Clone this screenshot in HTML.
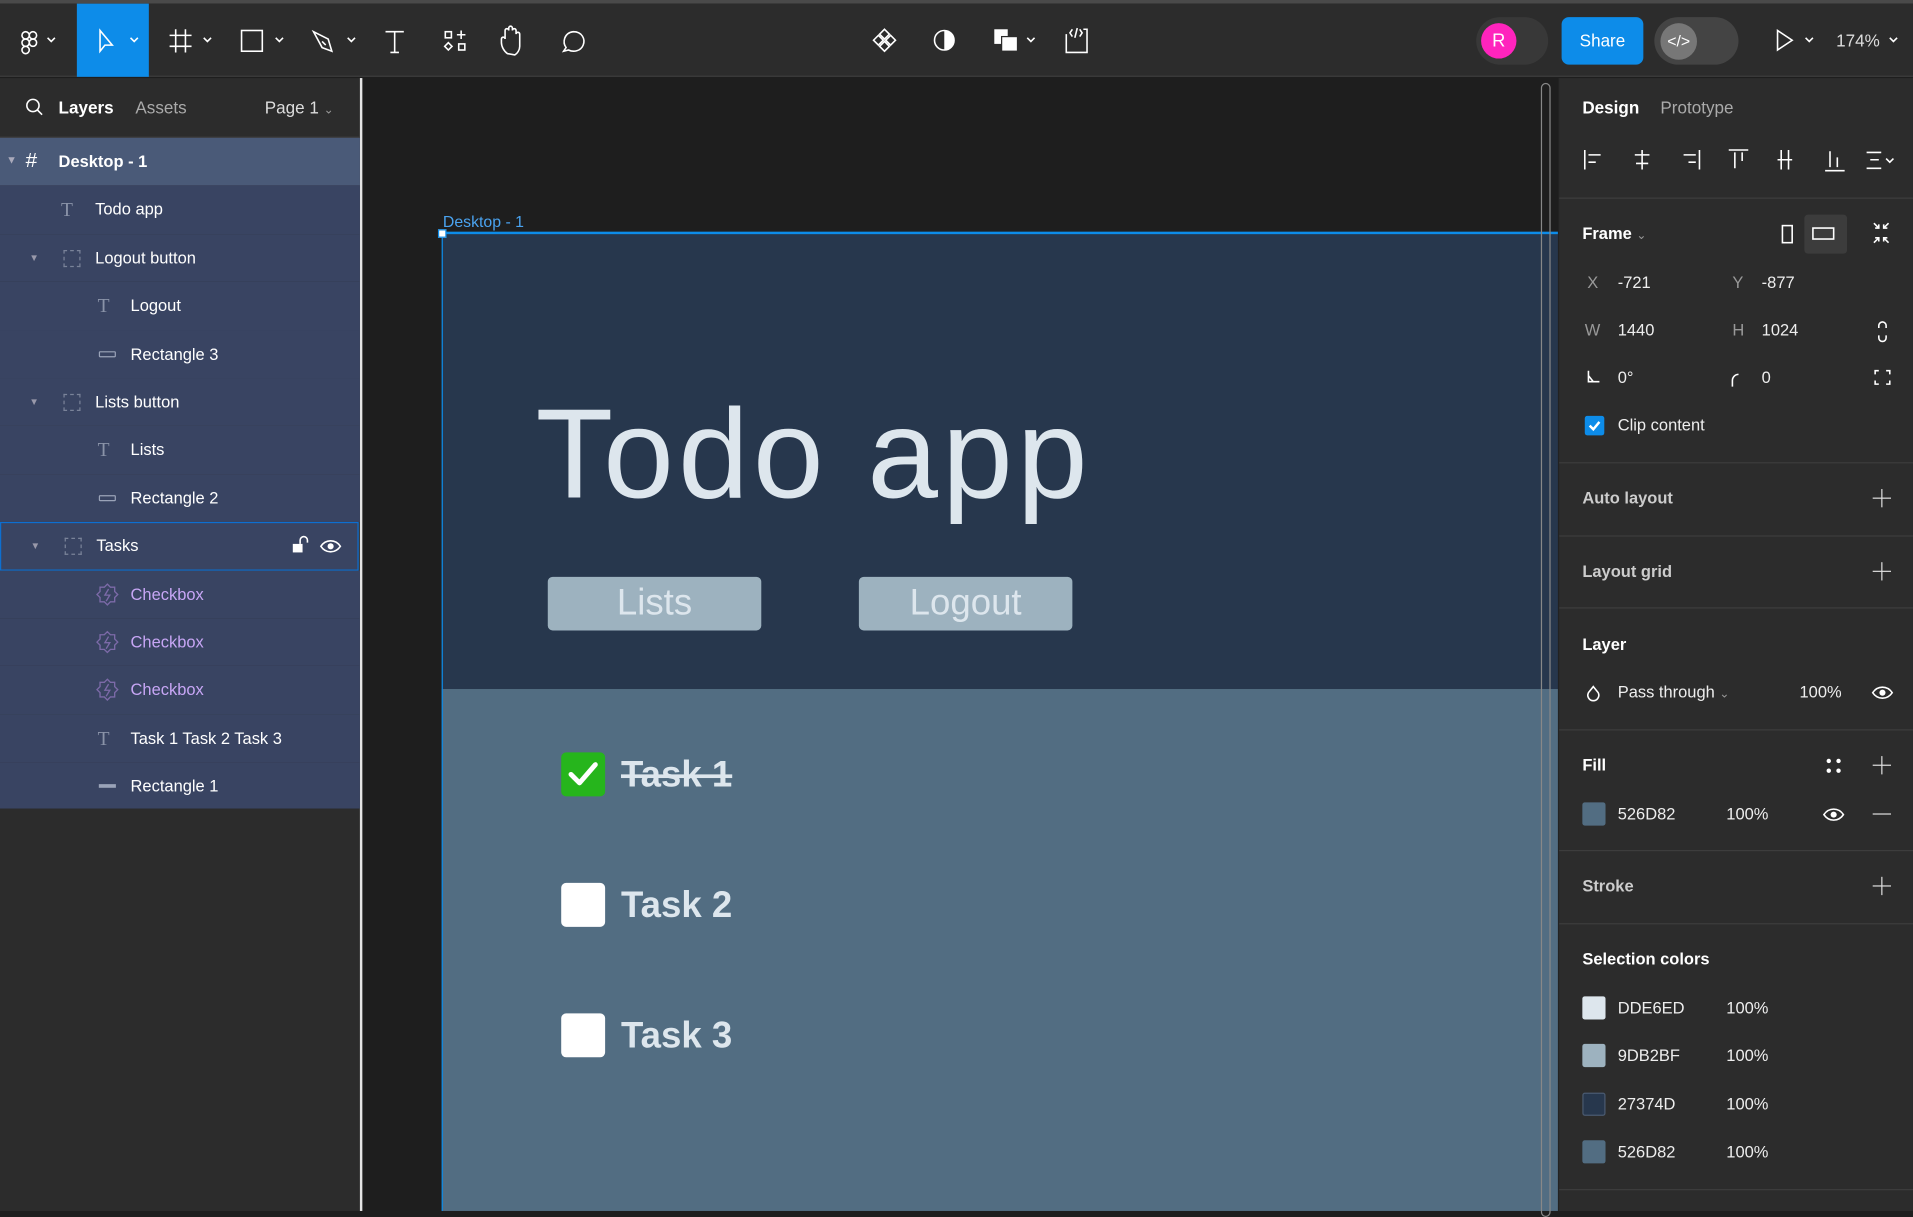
<!DOCTYPE html>
<html><head><meta charset="utf-8">
<style>
*{box-sizing:border-box;margin:0;padding:0}
html,body{width:1913px;height:1211px;overflow:hidden;background:#1e1e1e}
#r{position:absolute;left:0;top:0;width:1568px;height:993px;transform:scale(1.2200,1.2195);transform-origin:0 0;font-family:"Liberation Sans",sans-serif;color:#fff;font-size:13.5px}
.a{position:absolute}
svg{position:absolute;overflow:visible}
.ic{stroke:#fff;fill:none;stroke-width:1.3}
.t{position:absolute;white-space:nowrap}
.row{position:absolute;left:0;width:295px;height:39.4px;background:#394462}
.row .t{top:12px}
.lic{position:absolute;top:12px;color:#8a93a8;font-size:16px;font-family:"Liberation Serif",serif}
.sep{position:absolute;left:1278px;width:290px;height:1px;background:#3d3d3d}
.h{position:absolute;left:1297px;font-weight:bold;font-size:13.5px}
.plus{position:absolute;left:1535px;width:15px;height:15px}
.plus:before,.plus:after{content:"";position:absolute;background:#ddd}
.plus:before{left:7px;top:0;width:1.3px;height:15px}
.plus:after{top:7px;left:0;height:1.3px;width:15px}
.sw{position:absolute;left:1297px;width:19px;height:19px;border-radius:2px}
.val{position:absolute;font-size:13.5px;color:#eee}
</style></head><body><div id="r">
<!-- top bar -->
<div class="a" style="left:0;top:0;width:1568px;height:3px;background:#4a4a4a"></div>
<div class="a" style="left:0;top:3px;width:1568px;height:60px;background:#2c2c2c;border-bottom:1px solid #3e3e3e"></div>
<div class="a" style="left:63px;top:3px;width:59px;height:60px;background:#0d8ce9"></div>
<svg width="1568" height="63" style="left:0;top:0">
 <g class="ic">
  <rect x="18" y="26" width="6" height="6" rx="3"/><rect x="24" y="26" width="6" height="6" rx="3"/><rect x="18" y="32" width="6" height="6" rx="3"/><circle cx="27" cy="35" r="3"/><rect x="18" y="38" width="6" height="6" rx="3"/>
  <path d="M39 31l3 3 3-3"/>
  <path d="M82 25l0 17 4-5 6 0z"/><path d="M107 31l3 3 3-3"/>
  <path d="M144 24v19M152 24v19M139 29h18M139 38h18"/><path d="M167 31l3 3 3-3"/>
  <rect x="198" y="25" width="17" height="17"/><path d="M226 31l3 3 3-3"/>
  <path d="M257 26l12 6 3 10-8-3z M264 34l3 3"/><path d="M285 31l3 3 3-3"/>
  <path d="M316 26h15M323.5 26v17M320 43h7"/>
  <rect x="365" y="26" width="5" height="5"/><path d="M378 25v7M374.5 28.5h7"/><path d="M367.5 35l3 3-3 3-3-3z"/><rect x="376" y="36" width="5" height="5"/>
  <path d="M416 44c-3-2-5-6-5-9v-3c0-2 3-2 3 0v-7c0-2 3-2 3 0v-2c0-2 3-2 3 0v2c0-2 3-2 3 0v3c0-2 3-2 3 0v10c0 3-2 6-4 7z"/>
  <path d="M462 42l2-3c-3-4-2-12 6-13 7 0 10 6 8 11-2 5-8 6-12 4z"/>
  <path d="M725 24l4 4-4 4-4-4zM725 34l4 4-4 4-4-4zM720 29l4 4-4 4-4-4zM730 29l4 4-4 4-4-4z"/>
  <circle cx="774" cy="33" r="8"/>
  <path d="M842 31l3 3 3-3"/>
  <path d="M879 24l-2 3 2 3M885 24l2 3-2 3M883 23l-2 8M874 28v15h17v-19h-3"/>
  <path d="M1254 31l3 3 3-3"/>
  <path d="M1457 25v16l12-8z"/><path d="M1480 31l3 3 3-3"/><path d="M1549 31l3 3 3-3"/>
 </g>
 <path d="M774 25a8 8 0 0 1 0 16z" fill="#fff"/>
 <rect x="815" y="24" width="11" height="12" fill="#fff"/><rect x="821" y="30" width="13" height="12" fill="#fff" stroke="#2c2c2c" stroke-width="1"/>
</svg>
<div class="a" style="left:1210px;top:14px;width:59px;height:39px;border-radius:20px;background:#383838"></div>
<div class="a" style="left:1214px;top:19px;width:29px;height:29px;border-radius:50%;background:#ff24bd;text-align:center;line-height:29px;font-size:15px">R</div>
<div class="a" style="left:1280px;top:14px;width:67px;height:39px;border-radius:6px;background:#0d8ce9;text-align:center;line-height:39px;font-size:14px">Share</div>
<div class="a" style="left:1356px;top:14px;width:69px;height:39px;border-radius:20px;background:#444"></div>
<div class="a" style="left:1361px;top:19px;width:30px;height:30px;border-radius:50%;background:#777;text-align:center;line-height:29px;font-size:13px">&lt;/&gt;</div>
<div class="t" style="left:1505px;top:25px;font-size:14px;color:#ddd">174%</div>
<!-- left panel -->
<div class="a" style="left:0;top:64px;width:295px;height:929px;background:#2c2c2c"></div>
<div class="a" style="left:295px;top:64px;width:1.5px;height:929px;background:#e5e5e5"></div>
<svg width="20" height="20" style="left:20px;top:80px"><circle cx="7" cy="6.5" r="5" class="ic"/><path d="M10.5 10l4 4" class="ic"/></svg>
<div class="t" style="left:48px;top:80px;font-weight:bold;font-size:14px">Layers</div>
<div class="t" style="left:111px;top:80px;color:#aaa;font-size:14px">Assets</div>
<div class="t" style="left:217px;top:80px;color:#ddd;font-size:14px">Page 1 <span style="color:#999;font-size:10px">&#8964;</span></div>
<div class="a" style="left:0;top:112px;width:295px;height:1px;background:#3e3e3e"></div>
<div class="row" style="top:113px;background:#4a5a78"><span class="t" style="left:5px;top:13px;font-size:9px;color:#aab">&#9660;</span><span class="t" style="left:21px;top:9px;font-size:17px">#</span><span class="t" style="left:48px;font-weight:bold">Desktop - 1</span></div>
<div class="row" style="top:152.4px"><span class="lic" style="left:50px">T</span><span class="t" style="left:78px">Todo app</span></div>
<div class="row" style="top:191.8px"><span class="t" style="left:24px;top:15px;font-size:8px;color:#99a">&#9660;</span><span class="a" style="left:52px;top:13px;width:14px;height:14px;border:1px dashed #7a8399"></span><span class="t" style="left:78px">Logout button</span></div>
<div class="row" style="top:231.2px"><span class="lic" style="left:80px">T</span><span class="t" style="left:107px">Logout</span></div>
<div class="row" style="top:270.6px"><span class="a" style="left:81px;top:17px;width:14px;height:5px;border:1.3px solid #9aa3b8;border-radius:1px"></span><span class="t" style="left:107px">Rectangle 3</span></div>
<div class="row" style="top:310px"><span class="t" style="left:24px;top:15px;font-size:8px;color:#99a">&#9660;</span><span class="a" style="left:52px;top:13px;width:14px;height:14px;border:1px dashed #7a8399"></span><span class="t" style="left:78px">Lists button</span></div>
<div class="row" style="top:349.4px"><span class="lic" style="left:80px">T</span><span class="t" style="left:107px">Lists</span></div>
<div class="row" style="top:388.8px"><span class="a" style="left:81px;top:17px;width:14px;height:5px;border:1.3px solid #9aa3b8;border-radius:1px"></span><span class="t" style="left:107px">Rectangle 2</span></div>
<div class="row" style="top:428.2px;border:1px solid #0d6fd0;width:294px"><span class="t" style="left:24px;top:14px;font-size:8px;color:#99a">&#9660;</span><span class="a" style="left:52px;top:12px;width:14px;height:14px;border:1px dashed #7a8399"></span><span class="t" style="left:78px;top:11px">Tasks</span>
<svg width="60" height="20" style="left:236px;top:10px"><rect x="3" y="7" width="8" height="7" fill="#fff"/><path d="M9 7V4a3 3 0 0 1 6 0v2" class="ic" stroke-width="1.5"/><path d="M26 9c4-6 12-6 16 0c-4 6-12 6-16 0z" class="ic" stroke-width="1.5"/><circle cx="34" cy="9" r="2.5" fill="#fff"/></svg></div>
<div class="row" style="top:467.6px"><svg width="20" height="20" style="left:78px;top:10px"><path d="M10 1l2.5 2.5h3.5v3.5l2.5 2.5-2.5 2.5v3.5h-3.5l-2.5 2.5-2.5-2.5h-3.5v-3.5l-2.5-2.5 2.5-2.5v-3.5h3.5z M11 5l-3 5h4l-3 5" fill="none" stroke="#7c6aa8" stroke-width="1.1"/></svg><span class="t" style="left:107px;color:#c7a6f5">Checkbox</span></div>
<div class="row" style="top:507px"><svg width="20" height="20" style="left:78px;top:10px"><path d="M10 1l2.5 2.5h3.5v3.5l2.5 2.5-2.5 2.5v3.5h-3.5l-2.5 2.5-2.5-2.5h-3.5v-3.5l-2.5-2.5 2.5-2.5v-3.5h3.5z M11 5l-3 5h4l-3 5" fill="none" stroke="#7c6aa8" stroke-width="1.1"/></svg><span class="t" style="left:107px;color:#c7a6f5">Checkbox</span></div>
<div class="row" style="top:546.4px"><svg width="20" height="20" style="left:78px;top:10px"><path d="M10 1l2.5 2.5h3.5v3.5l2.5 2.5-2.5 2.5v3.5h-3.5l-2.5 2.5-2.5-2.5h-3.5v-3.5l-2.5-2.5 2.5-2.5v-3.5h3.5z M11 5l-3 5h4l-3 5" fill="none" stroke="#7c6aa8" stroke-width="1.1"/></svg><span class="t" style="left:107px;color:#c7a6f5">Checkbox</span></div>
<div class="row" style="top:585.8px"><span class="lic" style="left:80px">T</span><span class="t" style="left:107px">Task 1 Task 2 Task 3</span></div>
<div class="row" style="top:625.2px;height:38px"><span class="a" style="left:81px;top:18px;width:14px;height:2.5px;background:#9aa3b8"></span><span class="t" style="left:107px">Rectangle 1</span></div>
<!-- canvas -->
<div class="t" style="left:363px;top:174px;font-size:13px;color:#4aa3f0">Desktop - 1</div>
<div class="a" style="left:362px;top:190px;width:916px;height:375px;background:#27374D;border-top:2px solid #0d8ce9;border-left:1.5px solid #0d8ce9"></div>
<div class="a" style="left:362px;top:565px;width:916px;height:428px;background:#526D82;border-left:1.5px solid #0d8ce9"></div>
<div class="a" style="left:359px;top:188px;width:7px;height:7px;background:#fff;border:1.3px solid #0d8ce9"></div>
<div class="t" style="left:439px;top:314px;font-size:104px;color:#DDE6ED;letter-spacing:3.5px">Todo app</div>
<div class="a" style="left:449px;top:473px;width:175px;height:44px;background:#9DB2BF;border-radius:4px;color:#DDE6ED;font-size:30px;text-align:center;line-height:44px">Lists</div>
<div class="a" style="left:704px;top:473px;width:175px;height:44px;background:#9DB2BF;border-radius:4px;color:#DDE6ED;font-size:30px;text-align:center;line-height:44px">Logout</div>
<div class="a" style="left:460px;top:617px;width:36px;height:36px;background:#26b51c;border-radius:4px"></div>
<svg width="36" height="36" style="left:460px;top:617px"><path d="M8 18l7 7 13-15" fill="none" stroke="#fff" stroke-width="4" stroke-linecap="round" stroke-linejoin="round"/></svg>
<div class="t" style="left:509px;top:619px;font-size:30px;font-weight:bold;color:#DDE6ED;text-decoration:line-through">Task 1</div>
<div class="a" style="left:460px;top:724px;width:36px;height:36px;background:#fff;border-radius:4px"></div>
<div class="t" style="left:509px;top:726px;font-size:30px;font-weight:bold;color:#DDE6ED">Task 2</div>
<div class="a" style="left:460px;top:831px;width:36px;height:36px;background:#fff;border-radius:4px"></div>
<div class="t" style="left:509px;top:833px;font-size:30px;font-weight:bold;color:#DDE6ED">Task 3</div>
<div class="a" style="left:1263px;top:68px;width:8px;height:930px;border:1.3px solid #888;border-radius:4px"></div>
<!-- right panel -->
<div class="a" style="left:1277px;top:64px;width:291px;height:929px;background:#2c2c2c;border-left:1px solid #222"></div>
<div class="t" style="left:1297px;top:80px;font-weight:bold;font-size:14px">Design</div>
<div class="t" style="left:1361px;top:80px;color:#aaa;font-size:14px">Prototype</div>
<svg width="270" height="30" style="left:1290px;top:116px"><g class="ic">
<path d="M9 7v16M12 11h10M12 17h6"/><path d="M56 7v16M50 11h12M51 18h10"/><path d="M103 7v16M90 11h10M94 17h6"/>
<path d="M127 7h16M132 9v13M138 9v7"/><path d="M170 7v16M176 7v16M167 15h12"/><path d="M206 24h16M210 8v13M216 13v8"/><path d="M240 9h12M243 15h7M240 22h12M256 14l3 3 3-3"/></g></svg>
<div class="sep" style="top:162px"></div>
<div class="h" style="top:184px">Frame <span style="color:#999;font-weight:normal;font-size:10px">&#8964;</span></div>
<div class="a" style="left:1479px;top:176px;width:35px;height:32px;background:#3c3c3c;border-radius:3px"></div>
<svg width="100" height="30" style="left:1455px;top:177px"><g class="ic"><rect x="6" y="8" width="8" height="14"/><rect x="31" y="10" width="17" height="9"/>
<path d="M81 6l4 4M85 7v3h-3M93 6l-4 4M89 7v3h3M81 22l4-4M82 18h3v3M93 22l-4-4M92 18h-3v3"/></g></svg>
<div class="val" style="left:1301px;top:224px;color:#999">X</div><div class="val" style="left:1326px;top:224px">-721</div>
<div class="val" style="left:1420px;top:224px;color:#999">Y</div><div class="val" style="left:1444px;top:224px">-877</div>
<div class="val" style="left:1299px;top:263px;color:#999">W</div><div class="val" style="left:1326px;top:263px">1440</div>
<div class="val" style="left:1420px;top:263px;color:#999">H</div><div class="val" style="left:1444px;top:263px">1024</div>
<svg width="270" height="80" style="left:1290px;top:255px"><g class="ic"><path d="M250 14v-2a3 3 0 0 1 6 0v2M250 20v2a3 3 0 0 0 6 0v-2"/>
<path d="M12 49v9h9M12 53l4 5"/><path d="M130 62v-5a5 5 0 0 1 5-5"/><path d="M247 52v-3h3M256 49h3v3M247 57v3h3M256 60h3v-3"/></g></svg>
<div class="val" style="left:1326px;top:302px">0°</div><div class="val" style="left:1444px;top:302px">0</div>
<div class="a" style="left:1299px;top:341px;width:16px;height:16px;background:#0d8ce9;border-radius:2px"></div>
<svg width="16" height="16" style="left:1299px;top:341px"><path d="M4 8l3 3 5-6" fill="none" stroke="#fff" stroke-width="2"/></svg>
<div class="val" style="left:1326px;top:341px">Clip content</div>
<div class="sep" style="top:379px"></div>
<div class="h" style="top:401px;color:#ccc">Auto layout</div><div class="plus" style="top:401px"></div>
<div class="sep" style="top:439px"></div>
<div class="h" style="top:461px;color:#ccc">Layout grid</div><div class="plus" style="top:461px"></div>
<div class="sep" style="top:498px"></div>
<div class="h" style="top:521px">Layer</div>
<svg width="20" height="20" style="left:1298px;top:560px"><path d="M8 3l4 5a4.5 4.5 0 1 1-8 0z" class="ic"/></svg>
<div class="val" style="left:1326px;top:560px">Pass through <span style="color:#999;font-size:10px">&#8964;</span></div>
<div class="val" style="left:1475px;top:560px">100%</div>
<svg width="20" height="14" style="left:1534px;top:561px"><path d="M1 7c4-6 12-6 16 0c-4 6-12 6-16 0z" class="ic" stroke-width="1.5"/><circle cx="9" cy="7" r="2.5" fill="#fff"/></svg>
<div class="sep" style="top:598px"></div>
<div class="h" style="top:620px">Fill</div>
<svg width="14" height="14" style="left:1496px;top:621px"><circle cx="3" cy="3" r="1.8" fill="#fff"/><circle cx="11" cy="3" r="1.8" fill="#fff"/><circle cx="3" cy="11" r="1.8" fill="#fff"/><circle cx="11" cy="11" r="1.8" fill="#fff"/></svg>
<div class="plus" style="top:620px"></div>
<div class="sw" style="top:658px;background:#526D82"></div>
<div class="val" style="left:1326px;top:660px">526D82</div><div class="val" style="left:1415px;top:660px">100%</div>
<svg width="20" height="14" style="left:1494px;top:661px"><path d="M1 7c4-6 12-6 16 0c-4 6-12 6-16 0z" class="ic" stroke-width="1.5"/><circle cx="9" cy="7" r="2.5" fill="#fff"/></svg>
<div class="a" style="left:1535px;top:667px;width:15px;height:1.3px;background:#ddd"></div>
<div class="sep" style="top:697px"></div>
<div class="h" style="top:719px;color:#ccc">Stroke</div><div class="plus" style="top:719px"></div>
<div class="sep" style="top:757px"></div>
<div class="h" style="top:779px">Selection colors</div>
<div class="sw" style="top:817px;background:#DDE6ED"></div><div class="val" style="left:1326px;top:819px">DDE6ED</div><div class="val" style="left:1415px;top:819px">100%</div>
<div class="sw" style="top:856px;background:#9DB2BF"></div><div class="val" style="left:1326px;top:858px">9DB2BF</div><div class="val" style="left:1415px;top:858px">100%</div>
<div class="sw" style="top:896px;background:#27374D;border:1px solid #4a5a70"></div><div class="val" style="left:1326px;top:898px">27374D</div><div class="val" style="left:1415px;top:898px">100%</div>
<div class="sw" style="top:935px;background:#526D82"></div><div class="val" style="left:1326px;top:937px">526D82</div><div class="val" style="left:1415px;top:937px">100%</div>
<div class="sep" style="top:975px"></div>
</div></body></html>
